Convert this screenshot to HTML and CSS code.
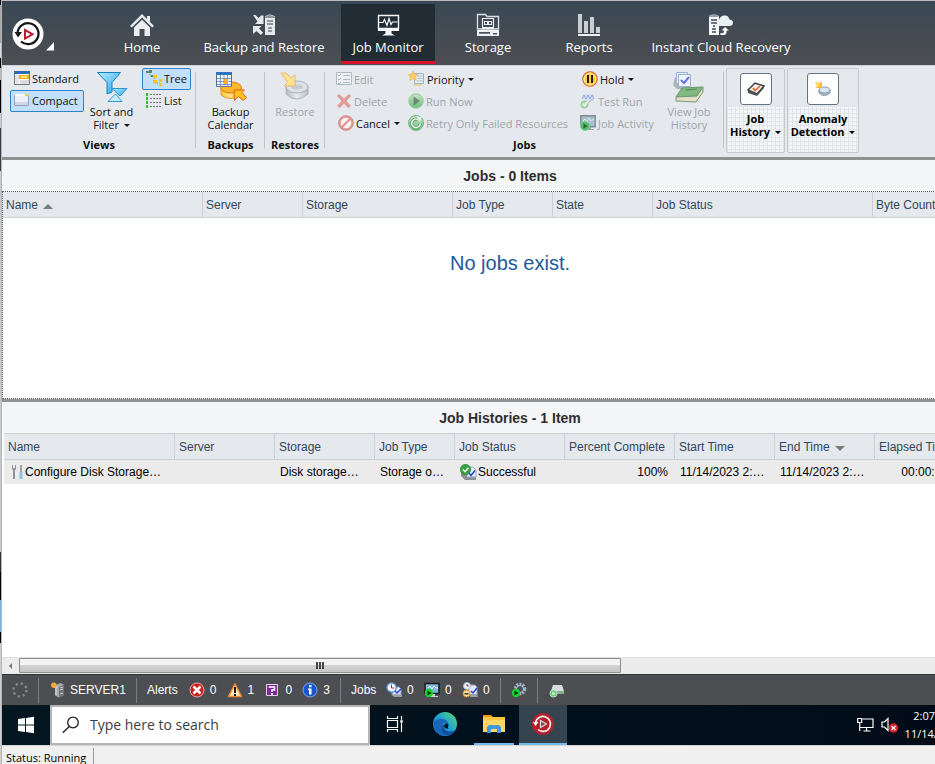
FILE: index.html
```
<!DOCTYPE html>
<html lang="en">
<head>
<meta charset="utf-8">
<title>Job Monitor</title>
<link rel="stylesheet" href="styles.css">
</head>
<body>
<svg class="defs" aria-hidden="true">
  <defs>
    <linearGradient id="gGreen" x1="0" y1="0" x2="0" y2="1"><stop offset="0" stop-color="#c4e6c4"/><stop offset="1" stop-color="#4fb861"/></linearGradient>
    <linearGradient id="gDrum" x1="0" y1="0" x2="1" y2="0"><stop offset="0" stop-color="#b4bbc0"/><stop offset=".5" stop-color="#e6eaec"/><stop offset="1" stop-color="#b9c0c5"/></linearGradient>
    <linearGradient id="gBlue" x1="0" y1="0" x2="1" y2="1"><stop offset="0" stop-color="#b5ecff"/><stop offset="1" stop-color="#27a3e8"/></linearGradient>
    <linearGradient id="gGold" x1="0" y1="0" x2="1" y2="0"><stop offset="0" stop-color="#ffc83a"/><stop offset=".5" stop-color="#ffe38a"/><stop offset="1" stop-color="#e8890c"/></linearGradient>
    <linearGradient id="gEdge" x1="0" y1="1" x2="1" y2="0"><stop offset="0" stop-color="#1672c4"/><stop offset=".5" stop-color="#1ea0d8"/><stop offset="1" stop-color="#5fdc6a"/></linearGradient>
  </defs>
</svg>
<div class="app">
  <header class="topbar">
    <button class="logo" aria-label="Application menu">
      <svg width="42" height="38" viewBox="0 0 42 38">
        <circle cx="16" cy="19" r="15.500" fill="#fff"/>
        <path d="M5.500 18.500A10.500 10.500 0 1 1 9 26.500" fill="none" stroke="#161616" stroke-width="2.200"/>
        <path d="M2.500 17h7.500l-4 5.500z" fill="#161616"/>
        <path d="M13 15v8.500l7.500-4.200z" fill="#fff" stroke="#b5202c" stroke-width="2"/>
        <path d="M42 27v8.500h-8z" fill="#fff"/>
      </svg>
    </button>
    <nav class="nav">
      <button class="tab">
        <svg width="24" height="24" viewBox="0 0 24 24" fill="#e9edf0"><path d="M12 1 0 13l1.800 1.600L12 4.600l10.200 10L24 13l-4-4V3h-3v3z"/><path d="M4 14.500 12 6.800l8 7.700V23h-5.500v-7h-5v7H4z"/></svg>
        <span>Home</span>
      </button>
      <button class="tab">
        <svg width="24" height="24" viewBox="0 0 24 24"><path d="M1 2h2.500L6.500 5 9 2.500h2.500V11H3L5.500 8.500zM1 13h8.500L7 15.500l4 4L9 22l-4.500-4L1 21z" fill="#e4e8eb"/><path d="M13 3.500q4.500-4 10 0V22H13z" fill="#e4e8eb"/><path d="M13 4q4.500-4 10 0v1H13z" fill="#8c959d"/><path d="M15 8h6M15 11h6M16 15h4M16 18h4" stroke="#3f4b55" stroke-width="1.200"/></svg>
        <span>Backup and Restore</span>
      </button>
      <button class="tab tab-on" aria-current="page">
        <svg width="24" height="24" viewBox="0 0 24 24"><path d="M2.500 2.500h20v13h-20z" fill="none" stroke="#f5f7f8" stroke-width="1.400"/><path d="M2 15h21v3H2zM9.500 18h6v2.500l3.500 2H6l3.500-2z" fill="#f5f7f8"/><path d="M3 9.500h4l1.500-3 2.500 6 2-7 2 6 1.500-2.500h5" fill="none" stroke="#f5f7f8" stroke-width="1.200"/></svg>
        <span>Job Monitor</span>
      </button>
      <button class="tab">
        <svg width="24" height="24" viewBox="0 0 24 24"><path d="M1.500 16V1.500h8l1.500 2h11.500V16z" fill="none" stroke="#dde2e6" stroke-width="1.300"/><path d="M6.500 5.500h11v9h-11z" fill="none" stroke="#eef1f3" stroke-width="1.200"/><path d="M8 8h8v4H8z" fill="#eef1f3"/><path d="M9 9h2v2H9zM13 9h2v2h-2z" fill="#3f4a53"/><path d="M6 14h12v2H6zM1 17h22v6H1z" fill="#eef1f3"/><path d="M3 19h11v1.800H3zM17 20h4v1.500h-4z" fill="#4a545c"/></svg>
        <span>Storage</span>
      </button>
      <button class="tab">
        <svg width="24" height="24" viewBox="0 0 24 24"><path d="M1 1h4v19H1zM7 8h4v12H7zM13 4h4v16h-4zM19 14h4v6h-4z" fill="#c9ced3"/><path d="M1 21h22v2H1z" fill="#eef1f3"/></svg>
        <span>Reports</span>
      </button>
      <button class="tab">
        <svg width="26" height="24" viewBox="0 0 26 24"><path d="M1 3h10v19H1z" fill="#f5f7f8"/><path d="M1 4V2.500Q6 0 10.500 2.500V4z" fill="#98a1a8"/><path d="M3 7h6M3 10h6M5 13h2M4 16h4M4 19h4" stroke="#3f4b55" stroke-width="1.300"/><path d="M11 13a3.500 3.500 0 0 1 0-6q1.500-5 6-4.500 3.500 0 4.500 4 4 .5 3.500 3.800-.5 2.700-3.500 2.700z" fill="#e9f0f2"/><path d="M17 14l4 3.500h-2.500v2q0 3-6 2.500v-2q3.500.5 3.500-1v-1.500h-2.500z" fill="#fff"/></svg>
        <span>Instant Cloud Recovery</span>
      </button>
    </nav>
  </header>

  <div class="ribbon">
    <section class="group views">
      <div class="group-body">
        <div class="stack density">
          <button class="cmd">
            <svg width="16" height="16" viewBox="0 0 16 16"><path d="M.5 1.500h15v13H.5z" fill="#fff" stroke="#777"/><path d="M0 1h16v3H0z" fill="#2c6fb0"/><path d="M1 5h4v9H1z" fill="#e4e4e4"/><path d="M5 5h10v4H5z" fill="#ffad1f"/><path d="M7 6h6v2H7z" fill="#ffe96a"/><path d="M6 11h9M6 13h9" stroke="#bbb"/></svg>
            Standard</button>
          <button class="cmd cmd-on" aria-pressed="true">
            <svg width="16" height="16" viewBox="0 0 16 16"><path d="M.5 3.500h14v10H.5z" fill="#eceff8" stroke="#98a2b6"/><path d="M1 2h10v2H1z" fill="#fff"/><path d="M11 2h4v2h-4z" fill="#e9c86e"/><path d="M1 10h13v3H1z" fill="#cfd6e8"/></svg>
            Compact</button>
        </div>
        <button class="big sort">
          <svg width="32" height="32" viewBox="0 0 32 32"><path d="M1.500 1.500h23L16 11.500V21l-5 2V11.500z" fill="url(#gBlue)" stroke="#1183c6"/><path d="M16 17.500h15L24 25z" fill="url(#gBlue)" stroke="#2a96d6"/><path d="M12 30.500h14L19.500 23z" fill="#c8efff" stroke="#2a96d6"/></svg>
          <span>Sort and<br>Filter <i class="caret"></i></span>
        </button>
        <div class="stack">
          <button class="cmd cmd-on" aria-pressed="true">
            <svg width="16" height="16" viewBox="0 0 16 16"><path d="M4 2v4h4v7h4" fill="none" stroke="#888" stroke-dasharray="1 1"/><path d="M0 1h3v2H0z" fill="#777"/><path d="M3 0h3v3H3zM5 5h2v2H5z" fill="#4c8f4c"/><path d="M8 5h3v3H8zM8 10h3v3H8zM13 9h3v3h-3zM13 13h3v3h-3z" fill="#ffc400"/></svg>
            Tree</button>
          <button class="cmd">
            <svg width="16" height="16" viewBox="0 0 16 16"><path d="M4 2.500h12M4 6.500h12M4 10.500h12M4 14.500h12" stroke="#777" stroke-dasharray="2 1"/><path d="M0 1h2v3H0zM0 5h2v3H0zM0 9h2v3H0zM0 13h2v3H0z" fill="#2fc02f"/></svg>
            List</button>
        </div>
      </div>
      <h2>Views</h2>
    </section>
    <section class="group backups">
      <div class="group-body">
        <button class="big">
          <svg width="32" height="32" viewBox="0 0 32 32"><path d="M6 17v7q9 7 20 0v-7z" fill="url(#gGold)" stroke="#d9830d" stroke-width=".8"/><ellipse cx="16" cy="16.500" rx="10.500" ry="5.500" fill="#ffb52e" stroke="#d9830d"/><path d="M1.500 1.500h15v14h-15z" fill="#fff" stroke="#5a6f86"/><path d="M1 1h16v3H1z" fill="#2f74b8"/><path d="M5.500 4v12M9 4v12M12.500 4v12M2 7.500h14M2 10.500h14M2 13.500h14" stroke="#6a9bc8"/><path d="M9 8h4v5H9z" fill="#ffab2e"/><path d="M19 19h10.500L27 21.500l4.500 5-3.500 3-4.500-4-4 4z" fill="#ffc31f" stroke="#e2601a"/></svg>
          <span>Backup<br>Calendar</span>
        </button>
      </div>
      <h2>Backups</h2>
    </section>
    <section class="group restores">
      <div class="group-body">
        <button class="big off" disabled>
          <svg width="32" height="32" viewBox="0 0 32 32"><path d="M7 16v7q10 10 22 0v-7z" fill="url(#gDrum)" stroke="#abb2b7"/><ellipse cx="18" cy="16" rx="11" ry="6" fill="#dde1e4" stroke="#abb2b7"/><ellipse cx="18" cy="16" rx="6" ry="2.500" fill="#c6cbcf"/><path d="M2 2h5l5.500 5L16 3.500V15H5l3.500-3.500z" fill="#fae58e" stroke="#ecb37c"/></svg>
          <span>Restore</span>
        </button>
      </div>
      <h2>Restores</h2>
    </section>
    <section class="group jobs">
      <div class="group-body">
        <div class="stack">
          <button class="cmd off" disabled>
            <svg width="16" height="16" viewBox="0 0 16 16"><path d="M.5 1.500h15v12H.5z" fill="#eef2f5" stroke="#a9b2ba"/><path d="M2 4l1 1 2-2M2 8l1 1 2-2M2 12l1 1 2-2" stroke="#83aed5" fill="none"/><path d="M7 4.500h7M7 8.500h7M7 11.500h7" stroke="#a9b5bd"/></svg>
            Edit</button>
          <button class="cmd off" disabled>
            <svg width="16" height="16" viewBox="0 0 16 16"><path d="M3 1l5 4.500L13 1l2 2-4.500 5 4.500 5-3 2-4-4.500L4 15l-3-2 4.500-5L1 3z" fill="#df8f8d"/></svg>
            Delete</button>
          <button class="cmd cancel">
            <svg width="16" height="16" viewBox="0 0 16 16"><circle cx="8" cy="8" r="6.300" fill="#fbf3f3" stroke="#e39a97" stroke-width="2"/><path d="M4 12l8-8" stroke="#df8e8b" stroke-width="1.800"/><circle cx="8" cy="8" r="7.400" fill="none" stroke="#c8706d" stroke-width=".7"/></svg>
            Cancel <i class="caret"></i></button>
        </div>
        <div class="stack">
          <button class="cmd">
            <svg width="17" height="16" viewBox="0 0 17 16"><path d="M6.500 2.500h9v10h-9z" fill="#e6eef7" stroke="#9db1c8"/><path d="M9 5h6M9 7.500h6M9 10h6" stroke="#aac2dc"/><path d="M5 13h8l2 2H5z" fill="#e5d69c"/><path d="M5 0l1.600 3.300 3.500.3-2.500 2.500.8 3.500L5 7.800 1.700 9.600l.7-3.500L0 3.600l3.400-.3z" fill="#fccf62" stroke="#eba94b" stroke-width=".5"/></svg>
            Priority <i class="caret"></i></button>
          <button class="cmd off" disabled>
            <svg width="16" height="16" viewBox="0 0 16 16"><circle cx="8" cy="8" r="7.200" fill="url(#gGreen)" stroke="#8fbe96"/><path d="M5.500 3.500v9l6.500-4.500z" fill="#5b7760"/></svg>
            Run Now</button>
          <button class="cmd off" disabled>
            <svg width="16" height="16" viewBox="0 0 16 16"><circle cx="8" cy="8" r="7.500" fill="url(#gGreen)" stroke="#5cae6b"/><path d="M10 4.500a4.300 4.300 0 1 0 2.300 4" fill="none" stroke="#46805a" stroke-width="3"/><path d="M10 4.500a4.300 4.300 0 1 0 2.300 4" fill="none" stroke="#e9f5ea" stroke-width="1.600"/><path d="M8.500 1.500l5 .5-1.500 5z" fill="#e9f5ea"/></svg>
            Retry Only Failed Resources</button>
        </div>
        <div class="stack">
          <button class="cmd hold">
            <svg width="16" height="16" viewBox="0 0 16 16"><circle cx="8" cy="8" r="7.200" fill="#ffd23a" stroke="#e0602a" stroke-width="1.200"/><circle cx="8" cy="8" r="6" fill="none" stroke="#fff0a8"/><path d="M5 4h2v8H5zM9 4h2v8H9z" fill="#2b1a0e"/></svg>
            Hold <i class="caret"></i></button>
          <button class="cmd off" disabled>
            <svg width="16" height="16" viewBox="0 0 16 16"><path d="M3 1h11v7H3z" fill="#d5dff5"/><path d="M2 6l2-4 2 4 2-4 2 4 2-4 2 4" fill="none" stroke="#7e9de0"/><circle cx="4.500" cy="11.500" r="3.500" fill="#a9dfa9" stroke="#7fc084"/><path d="M3 11l1.500 1.500L8 8.500" fill="none" stroke="#fff" stroke-width="1.300"/><path d="M8 10l6-5" stroke="#9aa6b2"/></svg>
            Test Run</button>
          <button class="cmd off" disabled>
            <svg width="16" height="16" viewBox="0 0 16 16"><path d="M.8.800h14.400v11H.8z" fill="#9db8cb" stroke="#6e7a82" stroke-width="1.400"/><path d="M3 6l2-2 2 3 2-4 2 3 3-2" fill="none" stroke="#dfeaf2"/><path d="M6 12h5v2h3v1H6z" fill="#8d979e"/><circle cx="5" cy="11" r="4.500" fill="#35b44d" stroke="#71cf80"/><path d="M3.500 8.500v5l4-2.500z" fill="#15441e"/></svg>
            Job Activity</button>
        </div>
        <button class="big view-history off" disabled>
          <svg width="32" height="32" viewBox="0 0 32 32"><path d="M2 6l-2 8 4 4h14v-5z" fill="#aeb4bb"/><path d="M3.500 1.500h11v11h-11z" fill="#e4edf8" stroke="#9cb3d0"/><path d="M5.500 3.500h12v12h-12z" fill="#edf3fb" stroke="#9cb3d0"/><path d="M8 9l3 3 5-6" fill="none" stroke="#6a74e6" stroke-width="2"/><path d="M9 17l21-1-6 9-21 1z" fill="#83b884" stroke="#6a9c6c"/><path d="M3 26v4l20 1 7-10v-5l-6 9z" fill="#e5dfc8" stroke="#719a70"/><path d="M13 19l11-1" stroke="#528654"/></svg>
          <span>View Job<br>History</span>
        </button>
      </div>
      <h2>Jobs</h2>
    </section>
    <button class="tile tile-history">
      <span class="tile-icon"><svg width="18" height="16" viewBox="0 0 18 16"><path d="M1 9l7-7 9 3-7 8z" fill="#f3ede8" stroke="#3c4146" stroke-width="1.500"/><path d="M1 9v3l9 3 7-8V5l-7 8z" fill="#50555a"/><path d="M6 7l2 2.500L13 5" fill="none" stroke="#e8662c" stroke-width="1.600"/></svg></span>
      <span>Job<br>History <i class="caret"></i></span>
    </button>
    <button class="tile tile-anomaly">
      <span class="tile-icon"><svg width="18" height="16" viewBox="0 0 18 16"><path d="M5 9v3q5 5 11 0V9z" fill="#a9bac5" stroke="#8497a4"/><ellipse cx="10.500" cy="9" rx="5.500" ry="3" fill="#d8e5ec" stroke="#8497a4"/><path d="M1 1l3 1 3-1 1 1v5H2l1-2z" fill="#ffb72b"/><path d="M2 2l4 3M6 2L3 6" stroke="#fff06a"/></svg></span>
      <span>Anomaly<br>Detection <i class="caret"></i></span>
    </button>
  </div>

  <main class="panes">
    <section class="pane pane-jobs">
      <h1>Jobs - 0 Items</h1>
      <div class="focus">
        <table class="grid">
          <colgroup><col class="w200"><col class="w100"><col class="w150"><col class="w100"><col class="w100"><col class="w220"><col></colgroup>
          <thead><tr><th>Name <i class="sort-up"></i></th><th>Server</th><th>Storage</th><th>Job Type</th><th>State</th><th>Job Status</th><th>Byte Count</th></tr></thead>
        </table>
        <p class="empty">No jobs exist.</p>
      </div>
    </section>
    <section class="pane pane-history">
      <h1>Job Histories - 1 Item</h1>
      <table class="grid grid-history">
        <colgroup><col class="w170"><col class="w100"><col class="w100"><col class="w80"><col class="w110"><col class="w110"><col class="w100"><col class="w100"><col></colgroup>
        <thead><tr><th>Name</th><th>Server</th><th>Storage</th><th>Job Type</th><th>Job Status</th><th>Percent Complete</th><th>Start Time</th><th>End Time <i class="sort-down"></i></th><th>Elapsed Time</th></tr></thead>
        <tbody><tr>
          <td><span class="with-icon"><svg width="12" height="14" viewBox="0 0 12 14"><path d="M0 0h1v3h2V0h1v4L3 5v9H1V5L0 4z" fill="#8e9499"/><path d="M8 0h2v7H8z" fill="#9ea4a8"/><path d="M7.500 7h3v7h-3z" fill="#8fc3e2"/></svg>Configure Disk Storage…</span></td>
          <td></td><td>Disk storage…</td><td>Storage o…</td>
          <td class="status"><span class="with-icon"><svg width="17" height="17" viewBox="0 0 17 17"><path d="M1 8v4l4 4h11v-3l-5-5z" fill="#8b8f94"/><path d="M7 3h6l3 3v7H7z" fill="#e6eefa" stroke="#9aabc8"/><path d="M9 9l2 2.500 4-5" fill="none" stroke="#2b3fd6" stroke-width="1.500"/><circle cx="5.500" cy="5.500" r="5.200" fill="#35a23f" stroke="#267d2f" stroke-width=".6"/><path d="M3 5.500l2 2.200 3.500-4" fill="none" stroke="#fff" stroke-width="1.500"/></svg>Successful</span></td>
          <td class="num">100%</td><td>11/14/2023 2:…</td><td>11/14/2023 2:…</td><td class="num">00:00:00</td>
        </tr></tbody>
      </table>
    </section>
    <div class="hscroll">
      <button class="hscroll-left" aria-label="Scroll left"></button>
      <div class="hscroll-thumb"></div>
    </div>
  </main>

  <div class="statusbar">
    <span class="cell spin"><svg width="18" height="18" viewBox="0 0 18 18"><circle cx="9" cy="9" r="6.500" fill="none" stroke="#85878a" stroke-width="2.500" stroke-dasharray="2.100 3"/></svg></span>
    <span class="cell server"><svg width="14" height="16" viewBox="0 0 14 16"><path d="M4 3l6-2 3 2v10l-5 2.500-4-2z" fill="#a3a8ab"/><path d="M8 5l5-2v10l-5 2.500z" fill="#6d7276"/><path d="M9 6l3-1M9 8l3-1M9 12l3-1" stroke="#d0d4d6"/><path d="M3 5h4M5 5v8" stroke="#dde0e2"/><circle cx="2.800" cy="3.200" r="2.700" fill="#f7a83a"/></svg>SERVER1</span>
    <span class="cell alerts"><b>Alerts</b>
      <span class="count"><svg width="16" height="16" viewBox="0 0 16 16"><circle cx="8" cy="8" r="7" fill="#c8201f" stroke="#eca8a4"/><path d="M4.500 4.500l7 7M11.500 4.500l-7 7" stroke="#fff" stroke-width="2.500"/></svg>0</span>
      <span class="count"><svg width="16" height="16" viewBox="0 0 16 16"><path d="M8 2l6.500 12.500h-13z" fill="#ffecc0" stroke="#f08a2c" stroke-width="1.600" stroke-linejoin="round"/><path d="M7 5h2v6H7zM7 12h2v2H7z" fill="#1a1a1a"/></svg>1</span>
      <span class="count"><svg width="16" height="16" viewBox="0 0 16 16"><path d="M2.500 2.500h11v11h-11z" fill="#7d2a96" stroke="#e5cdec"/><path d="M5.500 6V5h5v3H8v2M8 11v2" fill="none" stroke="#fff" stroke-width="1.600"/></svg>0</span>
      <span class="count"><svg width="16" height="16" viewBox="0 0 16 16"><circle cx="8" cy="8" r="7" fill="#1b54d0" stroke="#7ba8ee"/><path d="M7 3h2.500v2.200H7zM6 6.500h3.500v6H7V8H6z" fill="#fff"/></svg>3</span>
    </span>
    <span class="cell jobcounts"><b>Jobs</b>
      <span class="count"><svg width="16" height="16" viewBox="0 0 16 16"><path d="M7 5h6l2 2v6H6z" fill="#dfe9fa" stroke="#8aa0c6"/><path d="M5 12l3 3h8v-2z" fill="#9ba0a5"/><path d="M9 9l2 2 4-4" fill="none" stroke="#3342d8" stroke-width="1.500"/><circle cx="5.500" cy="5.500" r="4.700" fill="#f4f8fd" stroke="#4c82cc" stroke-width="1.300"/><path d="M5.500 2.500v3.500H8" fill="none" stroke="#b02a2a"/></svg>0</span>
      <span class="count"><svg width="16" height="16" viewBox="0 0 16 16"><path d="M1 1.500h14v10H1z" fill="#7db4dc" stroke="#17191c" stroke-width="1.500"/><path d="M4 6l2-2 2 3 2-3 2 2h2" fill="none" stroke="#fff"/><path d="M6 12h5v2h3v1H6z" fill="#ccd0d3"/><circle cx="5" cy="11" r="4.200" fill="#17d42a"/><path d="M3.500 8.500v5l4-2.500z" fill="#06330c"/></svg>0</span>
      <span class="count"><svg width="16" height="16" viewBox="0 0 16 16"><path d="M7 3h6l2 2v8H6z" fill="#dfe9fa" stroke="#8aa0c6"/><path d="M9 9l2 2 4-5" fill="none" stroke="#3342d8" stroke-width="1.500"/><path d="M8 12h7l1 3H8z" fill="#9ba0a5"/><circle cx="5" cy="4" r="3.500" fill="#f4f8fd" stroke="#9cb5dc"/><path d="M5 2v2h2" fill="none" stroke="#b02a2a"/><circle cx="4.500" cy="11.500" r="3.500" fill="#ffe39a" stroke="#d9842f"/><path d="M2.500 11h4v1.500h-4z" fill="#333"/></svg>0</span>
    </span>
    <span class="cell gear"><svg width="16" height="16" viewBox="0 0 16 16"><circle cx="9" cy="7" r="5" fill="none" stroke="#9fb4c9" stroke-width="2.500" stroke-dasharray="2 1.200"/><circle cx="9" cy="7" r="3.500" fill="#44525e" stroke="#bccbd9"/><circle cx="5" cy="11" r="4.200" fill="#17d42a"/><path d="M3.500 8.500v5l4-2.500z" fill="#06330c"/></svg></span>
    <span class="cell disk"><svg width="16" height="16" viewBox="0 0 16 16"><path d="M4 3h9l2 6H2z" fill="#d8dbdd"/><path d="M2 9h13v3H2z" fill="#9fa4a8"/><path d="M11 10h3v1h-3z" fill="#4c5"/><circle cx="4.500" cy="11.500" r="3.500" fill="#53c863" stroke="#c2ecc8"/><path d="M3.500 9.500v4l3-2z" fill="#fff"/></svg></span>
  </div>

  <div class="taskbar">
    <button class="start" aria-label="Start"><svg width="18" height="18" viewBox="0 0 18 18" fill="#fff"><path d="M1 3l7-1v6.500H1zM9 1.900 17 .8v7.700H9zM1 9.500h7V16l-7-1zM9 9.500h8v7.700l-8-1.100z"/></svg></button>
    <label class="search">
      <svg width="18" height="18" viewBox="0 0 18 18"><circle cx="11" cy="6.500" r="5.300" fill="none" stroke="#222" stroke-width="1.300"/><path d="M7.200 10.500.8 16.800" stroke="#222" stroke-width="1.400"/></svg>
      <input type="text" placeholder="Type here to search" aria-label="Search">
    </label>
    <button class="task" aria-label="Task view"><svg width="18" height="18" viewBox="0 0 18 18"><path d="M1.500 1v2.500h10V1M1.500 17v-2.500h10V17M1.500 5.500h10v7h-10z" fill="none" stroke="#fff" stroke-width="1.200"/><path d="M15.500 1v16" stroke="#fff" stroke-width="1.200"/><path d="M14 5h3v3h-3z" fill="#fff" stroke="#04141d" stroke-width=".5"/></svg></button>
    <button class="task" aria-label="Edge"><svg width="24" height="24" viewBox="0 0 24 24"><circle cx="12" cy="12" r="12" fill="url(#gEdge)"/><path d="M.2 11Q4 6 10 7q5 1 5.500 5.500-1-1.500-3.500-1.500-4 1-3 6 1 5 6 6.500Q8 25 3.500 20 0 16 .2 11z" fill="#1b66bd"/><path d="M9.500 13q-3 6 2 9.500 3 1.500 6 .2 3-1.700 4.500-4.700-3 1.800-6 1.500-4-.5-5-3.500-.5-1.500 0-3z" fill="#12509c"/><path d="M11.500 12.500q1-1.500 3-1 1.500 1 .8 2.500-.8 1.500.2 2.500-3 .5-4-1-.7-1.500 0-3z" fill="#04141d"/></svg></button>
    <button class="task running" aria-label="File Explorer"><svg width="22" height="20" viewBox="0 0 22 20"><path d="M0 1h8l2 2H0z" fill="#e79c11"/><path d="M0 3h22v15H0z" fill="#ffd766"/><path d="M0 3h22v3H0z" fill="#fbc740"/><path d="M4 19v-6l2-2h10l2 2v6h-4v-4H8v4z" fill="#3e9ae0"/></svg></button>
    <button class="task current" aria-label="Backup console"><svg width="22" height="22" viewBox="0 0 22 22"><circle cx="11" cy="11" r="11" fill="#b5202b"/><path d="M3.500 10.500A7.500 7.500 0 1 1 6 16.500" fill="none" stroke="#fff" stroke-width="1.600"/><path d="M1 9h5.500l-3 4z" fill="#fff"/><path d="M8.500 7.500v7l6-3.500z" fill="#7b4a52" stroke="#d8e0e4" stroke-width="1.200"/></svg></button>
    <div class="tray">
      <svg width="18" height="16" viewBox="0 0 18 16" fill="none" stroke="#fff" stroke-width="1.200"><path d="M5.500 2H16v8.500H3M9.500 10.500V14M6.500 14h7M.700 1.500h4v4h-4zM2.700 5.500V14"/></svg>
      <svg width="18" height="16" viewBox="0 0 18 16"><path d="M7 1.500v12L3.500 10H1V5h2.500z" fill="none" stroke="#fff" stroke-width="1.200"/><circle cx="12.500" cy="11" r="4.700" fill="#d8222c"/><path d="M10.500 9l4 4M14.500 9l-4 4" stroke="#fff" stroke-width="1.300"/></svg>
      <time class="clock">2:07 PM<br>11/14/2023</time>
    </div>
  </div>
  <footer class="footer"><span>Status: Running</span></footer>
</div>
</body>
</html>
```
FILE: styles.css
```
* { box-sizing: border-box; }
html, body { height: 100%; }
body {
  margin: 0;
  overflow: hidden;
  font: 12px/16px "Liberation Sans", Arial, sans-serif;
  color: #111;
  padding-left: 2px;
  background:
    linear-gradient(#b4b6b8, #b4b6b8) 1px 0 / 1px 100% no-repeat,
    linear-gradient(#111 5px, #a7a7a7 5px 43px, #dcdcdc 43px 58px, #000 58px 68px, #b8b8b8 68px 80px, #000 80px 113px, #ccc 113px 128px, #34404c 128px 171px, #c6c9cf 171px 552px, #333 552px 572px, #000 572px 600px, #7fb2dc 600px 632px, #000 632px 643px, #cfcfcf 643px) 0 0 / 1px 100% no-repeat,
    #fff;
}
.defs { position: absolute; width: 0; height: 0; }
button { font: inherit; color: inherit; background: none; border: 0; padding: 0; }
svg { display: block; flex: none; }
h1, h2, p { margin: 0; }
.app { display: flex; flex-direction: column; height: 100%; overflow: hidden; }

.topbar {
  flex: none;
  display: flex;
  height: 65px;
  border-top: 1px solid #b9bcbe;
  background: linear-gradient(#394855, #4d4e51);
  overflow: hidden;
}
.logo { width: 95px; padding: 14px 0 0 10px; display: flex; align-items: flex-start; }
.nav { display: flex; padding-top: 3px; }
.tab {
  flex: none;
  display: flex;
  flex-direction: column;
  align-items: center;
  width: 96px;
  height: 60px;
  padding-top: 9px;
  color: #fff;
  font: 13px/20px "Open Sans", "Noto Sans", sans-serif;
  white-space: nowrap;
}
.tab:nth-child(1) { width: 90px; }
.tab:nth-child(2) { width: 154px; }
.tab:nth-child(3) { width: 94px; }
.tab:nth-child(4) { width: 106px; }
.tab:nth-child(6) { width: 168px; }
.tab-on { background: #222c35; border-bottom: 3px solid #d5112b; }

.ribbon {
  flex: none;
  display: flex;
  height: 95px;
  padding-top: 2px;
  border-top: 1px solid #cfd2d4;
  border-bottom: 3px solid #909192;
  background: #e5e9ed;
  font: 11px/13px "Open Sans", "Noto Sans", sans-serif;
  overflow: hidden;
}
.group { flex: none; display: flex; flex-direction: column; position: relative; }
.group::after {
  content: "";
  position: absolute;
  top: 4px; right: 0;
  width: 1px; height: 76px;
  background: #bfc3c6;
}
.group h2 { font-size: 11px; line-height: 18px; text-align: center; }
.group-body { display: flex; height: 68px; }
.views { width: 194px; }
.views .group-body { padding-left: 8px; }
.backups, .restores { align-items: center; }
.backups { width: 69px; }
.restores { width: 60px; }
.jobs { width: 399px; }
.jobs .group-body { display: grid; grid-template-columns: 72px 172px 82px 58px; padding-left: 9px; }
.stack { display: flex; flex-direction: column; align-items: flex-start; }
.density { width: 74px; align-items: stretch; }
.cmd {
  display: flex;
  align-items: center;
  gap: 2px;
  height: 22px;
  padding: 0 3px 2px;
  border: 1px solid transparent;
  border-radius: 2px;
  white-space: nowrap;
}
.cmd-on { background: #c2e0fb; border-color: #2f83cc; }
.off { color: #a0a4a8; }
.cmd.off svg { opacity: .85; }
.jobs .cmd { padding: 0 1px; }
.jobs .cancel, .jobs .hold { padding-left: 3px; }
.big { display: flex; flex-direction: column; align-items: center; gap: 2px; padding-top: 3px; }
.sort { width: 55px; }
.views .stack:last-child { padding-left: 3px; }
.caret {
  display: inline-block;
  margin-left: 2px;
  border: 3px solid transparent;
  border-top-color: currentColor;
  border-bottom: 0;
  vertical-align: 2px;
}
.tile {
  flex: none;
  display: flex;
  flex-direction: column;
  align-items: center;
  gap: 7px;
  height: 85px;
  margin-left: 2px;
  padding-top: 4px;
  border: 1px solid #c6cacd;
  border-radius: 2px;
  font-weight: bold;
  color: #000;
  background:
    linear-gradient(#e5e9ed 38px, transparent 38px),
    repeating-linear-gradient(90deg, #e0e4e8 0 1px, transparent 1px 4px),
    repeating-linear-gradient(#e0e4e8 0 1px, #f3f5f6 1px 4px);
}
.tile-history { width: 59px; }
.tile-anomaly { width: 72px; }
.tile-icon {
  display: grid;
  place-items: center;
  width: 32px; height: 32px;
  border: 1px solid #66737e;
  border-radius: 3px;
  background: #fdfdfd;
}

.panes { flex: 1; min-height: 0; display: flex; flex-direction: column; overflow: hidden; background: #fff; }
.pane { flex: none; min-width: 1016px; }
.pane h1 {
  height: 31px;
  font-size: 14px;
  line-height: 32px;
  text-align: center;
  color: #2d2d2d;
  background: #f4f5f7;
}
.pane-jobs { border-bottom: 3px solid #929292; }
.focus { height: 208px; border: 1px dotted #555; }
.grid { width: 100%; table-layout: fixed; border-collapse: separate; border-spacing: 0; }
.grid th {
  height: 26px;
  padding: 0 3px;
  text-align: left;
  font-weight: normal;
  color: #33475a;
  background: #e5e8ed;
  border-right: 1px solid #cdd0d3;
  border-bottom: 1px solid #cdd0d3;
  white-space: nowrap;
}
.grid-history { border-left: 2px solid #fff; }
.grid-history th { height: 27px; border-top: 1px solid #cdd0d3; }
.grid-history th, .grid-history td { padding: 0 4px; }
.grid td { height: 24px; background: #ebebeb; color: #000; white-space: nowrap; overflow: hidden; }
.grid td { padding-left: 5px; }
.grid td.num { text-align: right; padding-right: 7px; }
.grid-history td:first-child { padding-left: 8px; }
.grid.grid-history td:last-child { padding-right: 70px; }
.with-icon { display: flex; align-items: center; gap: 1px; }
.w80 { width: 80px; } .w100 { width: 100px; } .w110 { width: 110px; } .w150 { width: 150px; }
.w170 { width: 171px; } .w200 { width: 200px; } .w220 { width: 220px; }
.sort-up, .sort-down { display: inline-block; margin-left: 2px; border: 5px solid transparent; }
.sort-up { border-top: 0; border-bottom-color: #7c7c7c; }
.sort-down { border-bottom: 0; border-top-color: #7c7c7c; }
.empty { padding-top: 32px; text-align: center; font-size: 20px; line-height: 26px; color: #24599d; }
.hscroll { display: flex; height: 17px; margin-top: auto; background: #ececec; border-top: 1px solid #e0e0e0; }
.hscroll-left { width: 17px; display: grid; place-items: center; }
.hscroll-left::before { content: ""; border: 3px solid transparent; border-left: 0; border-right-color: #777; }
.hscroll-thumb {
  width: 602px;
  height: 15px;
  border: 1px solid #8d8d8d;
  border-radius: 1px;
  background:
    repeating-linear-gradient(90deg, #444 0 2px, transparent 2px 3px) center / 8px 7px no-repeat,
    linear-gradient(#f3f3f3 50%, #d2d2d2 50%, #c6c6c6);
}

.statusbar {
  flex: none;
  display: flex;
  align-items: center;
  height: 31px;
  border-top: 1px solid #2f3336;
  background: #4d4e52;
  color: #fff;
}
.statusbar b { font-weight: normal; }
.cell { display: flex; align-items: center; height: 25px; border-right: 1px solid #7b7d80; white-space: nowrap; }
.spin { width: 37px; justify-content: center; }
.server { width: 98px; padding-left: 12px; gap: 5px; }
.alerts { width: 204px; padding-left: 10px; }
.jobcounts { width: 160px; padding-left: 10px; }
.count { display: flex; align-items: center; gap: 5px; width: 38px; }
.alerts b { width: 42px; }
.jobcounts b { width: 35px; }
.gear { width: 37px; justify-content: center; }
.disk { width: 37px; justify-content: center; border: 0; }

.taskbar {
  flex: none;
  display: flex;
  height: 40px;
  background: linear-gradient(90deg, #04161f, #010c18);
  color: #fff;
  overflow: hidden;
}
.start { flex: none; width: 48px; display: grid; place-items: center; }
.search {
  flex: none;
  display: flex;
  align-items: center;
  gap: 10px;
  width: 320px;
  padding-left: 10px;
  border: 2px solid #b5b5b5;
  background: #fff;
}
.search input {
  flex: 1;
  min-width: 0;
  border: 0;
  outline: 0;
  padding: 0;
  font: 14px/20px "Open Sans", "Noto Sans", sans-serif;
}
.search input::placeholder { color: #3c3c3c; opacity: 1; }
.task { flex: none; width: 50px; display: grid; place-items: center; border-bottom: 2px solid transparent; }
.running { width: 40px; margin: 0 5px 0 4px; border-color: #76b9ed; }
.current { width: 48px; background: #36444f; border-color: #76b9ed; }
.tray {
  flex: none;
  display: flex;
  align-items: center;
  gap: 6px;
  margin-left: auto;
  margin-right: -28px;
}
.clock { text-align: center; font: 11px/18px "Open Sans", "Noto Sans", sans-serif; }
.footer {
  flex: none;
  display: flex;
  height: 19px;
  border-top: 1px solid #d5d5d5;
  background: #f0f0f0;
  font: 11px/16px "Open Sans", "Noto Sans", sans-serif;
}
.footer span { margin-top: 2px; padding: 2px 7px 0 4px; border-right: 1px solid #9a9a9a; color: #000; }
```
